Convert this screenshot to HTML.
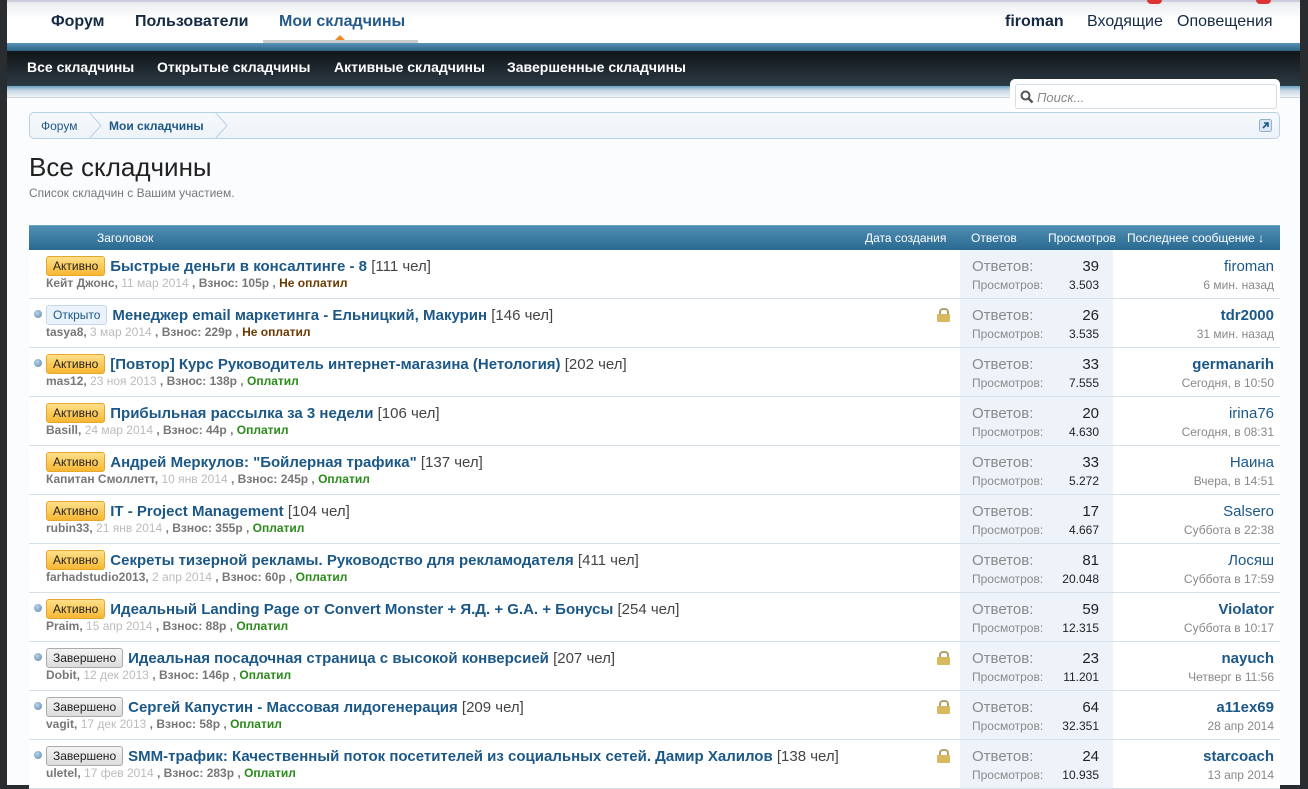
<!DOCTYPE html>
<html><head><meta charset="utf-8"><style>
*{margin:0;padding:0;box-sizing:border-box}
body{width:1308px;height:785px;overflow:hidden;background:#2a2d30;font-family:"Liberation Sans",Arial,sans-serif;position:relative}
#page{position:absolute;left:7px;top:0;width:1293px;height:785px;background:#fbfcfe}
#top{position:absolute;left:0;top:0;width:1293px;height:43px;background:linear-gradient(#e9ecef,#fff 40%,#fff);border-top:2px solid #ccd;}
.tn{position:absolute;top:13px;font-size:16px;font-weight:bold;color:#152a44}
#blue{position:absolute;left:0;top:43px;width:1293px;height:8px;background:linear-gradient(#5b93b8,#2c6487)}
#dark{position:absolute;left:0;top:51px;width:1293px;height:35px;background:linear-gradient(#111518,#2c3a45)}
.sn{position:absolute;top:59px;font-size:14px;font-weight:bold;color:#fff}
#low{position:absolute;left:0;top:86px;width:1293px;height:12px;background:linear-gradient(#6aa2c4,#c6d6e2 40%,#eef2f5);border-bottom:1px solid #cfd8df}
#search{position:absolute;left:1003px;top:79px;width:270px;height:33px;background:#fff;border-radius:5px 5px 0 0}
#search div{position:absolute;left:5px;top:5px;width:262px;height:25px;border:1px solid #d5dde5;border-radius:3px;font-size:13px;font-style:italic;color:#888;padding:5px 0 0 21px}
#crumb{position:absolute;left:22px;top:112px;width:1251px;height:27px;border:1px solid #b9d1e4;border-radius:5px;background:linear-gradient(#f6f9fc,#eef3f8)}
h1{position:absolute;left:22px;top:152px;font-size:26px;font-weight:normal;color:#222}
.sub{position:absolute;left:22px;top:186px;font-size:12px;color:#777}
#thead{position:absolute;left:22px;top:225px;width:1251px;height:25px;background:linear-gradient(#4f8db3,#2a6a91);border-top:1px solid #6ba6c8}
#thead span{position:absolute;top:5px;font-size:12px;color:#fff}
.row{position:absolute;left:22px;width:1251px;height:49px;border-bottom:1px solid #d5e0ea;background:#fff}
.st{position:absolute;left:931px;top:0;width:153px;height:48px;background:#edf3f9}
.lbl{position:absolute;font-size:15px;color:#8a8a8a}
.sl{position:absolute;font-size:12px;color:#8a8a8a}
.n1{position:absolute;right:0;font-size:15px;color:#222}
.n2{position:absolute;right:0;font-size:12px;color:#222}
.t{position:absolute;left:17px;top:6px;font-size:15px;font-weight:bold;color:#1b5888;white-space:nowrap}
.t i{font-style:normal;font-weight:normal;color:#444}
.b{display:inline-block;font-size:12px;font-weight:normal;padding:2px 6px;border-radius:3px;margin-right:5px;vertical-align:1px}
.ba{background:linear-gradient(#ffe08a,#f7b733);border:1px solid #e7a72c;color:#222}
.bo{background:#eaf2fb;border:1px solid #c5d8ea;color:#1b5888}
.bz{background:linear-gradient(#f4f4f4,#dcdcdc);border:1px solid #aaa;color:#222}
.m{position:absolute;left:17px;top:26px;font-size:12px;font-weight:bold;color:#777;white-space:nowrap}
.m s{text-decoration:none;color:#bbb;font-weight:normal}
.m .no{color:#6b3a00}.m .ok{color:#2a8a1a}
.dot{position:absolute;left:5px;top:11px;width:8px;height:8px;border-radius:50%;background:radial-gradient(circle at 40% 35%,#b8d3ea,#5b87ad)}
.lk{position:absolute;left:908px;top:9px;width:13px;height:14px}
.lk:before{content:"";position:absolute;left:2px;top:0;width:6px;height:6px;border:2px solid #b4a06c;border-bottom:none;border-radius:4px 4px 0 0}
.lk:after{content:"";position:absolute;left:0;top:6px;width:13px;height:8px;background:#d9b95f;border-radius:1px}
.u{position:absolute;right:6px;top:8px;font-size:15px;color:#1b5888}
.d{position:absolute;right:6px;top:28px;font-size:12px;color:#888}
</style></head><body>
<div id="page">
<div id="top"></div>
<div class="tn" style="left:44px">Форум</div>
<div class="tn" style="left:128px">Пользователи</div>
<div class="tn" style="left:272px;color:#235a89">Мои складчины</div>
<div style="position:absolute;left:256px;top:40px;width:155px;height:3px;background:#ccc"></div>
<div style="position:absolute;left:328px;top:35px;border:5px solid transparent;border-bottom:5px solid #f08a24;border-top:0"></div>
<div class="tn" style="left:998px">firoman</div>
<div class="tn" style="left:1080px;font-weight:normal">Входящие</div>
<div class="tn" style="left:1170px;font-weight:normal">Оповещения</div>
<div style="position:absolute;left:1140px;top:0;width:15px;height:4px;background:#d33;border-radius:0 0 4px 4px"></div>
<div style="position:absolute;left:1249px;top:0;width:15px;height:4px;background:#d33;border-radius:0 0 4px 4px"></div>
<div id="blue"></div><div id="dark"></div><div id="low"></div>
<div class="sn" style="left:20px">Все складчины</div>
<div class="sn" style="left:150px">Открытые складчины</div>
<div class="sn" style="left:327px">Активные складчины</div>
<div class="sn" style="left:500px">Завершенные складчины</div>
<div id="search"><div>Поиск...</div><svg style="position:absolute;left:10px;top:11px" width="14" height="14" viewBox="0 0 14 14"><circle cx="5.5" cy="5.5" r="4" fill="none" stroke="#555" stroke-width="2"/><path d="M8.5 8.5l4 4" stroke="#555" stroke-width="2.5"/></svg></div>
<div id="crumb">
<span style="position:absolute;left:11px;top:6px;font-size:12px;color:#1b5888">Форум</span>
<svg style="position:absolute;left:58px;top:-1px" width="14" height="27"><path d="M1 0l12 13.5L1 27" fill="none" stroke="#b9d1e4"/></svg>
<span style="position:absolute;left:79px;top:6px;font-size:12px;font-weight:bold;color:#1b5888">Мои складчины</span>
<svg style="position:absolute;left:184px;top:-1px" width="14" height="27"><path d="M1 0l12 13.5L1 27" fill="none" stroke="#b9d1e4"/></svg>
<svg style="position:absolute;left:1229px;top:6px" width="13" height="13"><rect x=".5" y=".5" width="12" height="12" rx="2" fill="#dbe8f4" stroke="#8fb0cc"/><path d="M4 9l5-5M5 4h4v4" stroke="#1b5888" stroke-width="1.6" fill="none"/></svg>
</div>
<h1>Все складчины</h1>
<div class="sub">Список складчин с Вашим участием.</div>
<div id="thead"><span style="left:68px">Заголовок</span><span style="left:836px">Дата создания</span><span style="left:942px">Ответов</span><span style="left:1019px">Просмотров</span><span style="left:1098px">Последнее сообщение ↓</span></div>
<div id="rows"></div>
</div>
<script>
var R=[
["a","Быстрые деньги в консалтинге - 8","111","Кейт Джонс","11 мар 2014","105","no",0,0,"39","3.503","firoman","6 мин. назад",0],
["o","Менеджер email маркетинга - Ельницкий, Макурин","146","tasya8","3 мар 2014","229","no",1,1,"26","3.535","tdr2000","31 мин. назад",1],
["a","[Повтор] Курс Руководитель интернет-магазина (Нетология)","202","mas12","23 ноя 2013","138","ok",1,0,"33","7.555","germanarih","Сегодня, в 10:50",1],
["a","Прибыльная рассылка за 3 недели","106","Basill","24 мар 2014","44","ok",0,0,"20","4.630","irina76","Сегодня, в 08:31",0],
["a","Андрей Меркулов: \"Бойлерная трафика\"","137","Капитан Смоллетт","10 янв 2014","245","ok",0,0,"33","5.272","Наина","Вчера, в 14:51",0],
["a","IT - Project Management","104","rubin33","21 янв 2014","355","ok",0,0,"17","4.667","Salsero","Суббота в 22:38",0],
["a","Секреты тизерной рекламы. Руководство для рекламодателя","411","farhadstudio2013","2 апр 2014","60","ok",0,0,"81","20.048","Лосяш","Суббота в 17:59",0],
["a","Идеальный Landing Page от Convert Monster + Я.Д. + G.A. + Бонусы","254","Praim","15 апр 2014","88","ok",1,0,"59","12.315","Violator","Суббота в 10:17",1],
["z","Идеальная посадочная страница с высокой конверсией","207","Dobit","12 дек 2013","146","ok",1,1,"23","11.201","nayuch","Четверг в 11:56",1],
["z","Сергей Капустин - Массовая лидогенерация","209","vagit","17 дек 2013","58","ok",1,1,"64","32.351","a11ex69","28 апр 2014",1],
["z","SMM-трафик: Качественный поток посетителей из социальных сетей. Дамир Халилов","138","uletel","17 фев 2014","283","ok",1,1,"24","10.935","starcoach","13 апр 2014",1]];
var L={a:["ba","Активно"],o:["bo","Открыто"],z:["bz","Завершено"]},h="";
R.forEach(function(r,i){var y=250+i*49;
h+='<div class="row" style="top:'+y+'px">'+(r[7]?'<div class="dot"></div>':'')+
'<div class="t"><span class="b '+L[r[0]][0]+'">'+L[r[0]][1]+'</span>'+r[1]+' <i>['+r[2]+' чел]</i></div>'+
'<div class="m">'+r[3]+', <s>'+r[4]+'</s> , Взнос: '+r[5]+'р , <span class="'+r[6]+'">'+(r[6]=="no"?"Не оплатил":"Оплатил")+'</span></div>'+
(r[8]?'<div class="lk"></div>':'')+
'<div class="st"><span class="lbl" style="left:12px;top:8px">Ответов:</span><span class="n1" style="right:14px;top:8px">'+r[9]+'</span><span class="sl" style="left:12px;top:28px">Просмотров:</span><span class="n2" style="right:14px;top:28px">'+r[10]+'</span></div>'+
'<div class="u"'+(r[13]?' style="font-weight:bold"':'')+'>'+r[11]+'</div><div class="d">'+r[12]+'</div></div>';});
document.getElementById("rows").innerHTML=h;
</script>
</body></html>
